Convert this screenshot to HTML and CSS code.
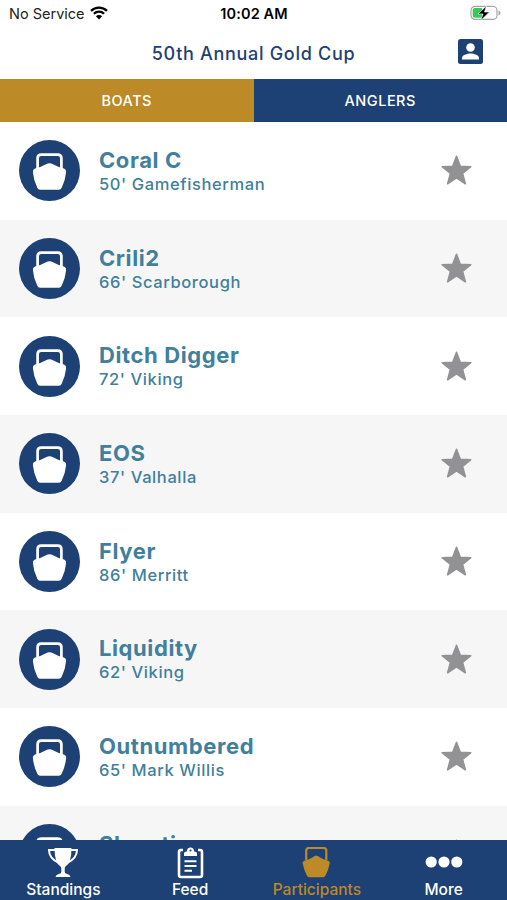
FILE: index.html
```html
<!DOCTYPE html>
<html lang="en">
<head>
  <meta charset="UTF-8">
  <meta name="viewport" content="width=device-width, initial-scale=1.0">
  <title>50th Annual Gold Cup</title>
  <link rel="stylesheet" href="styles.css">
</head>
<body>
  <svg class="defs" width="0" height="0">
    <symbol id="boat" viewBox="0 0 61 61">
      <path d="M18.600 29V18.300q0-3.700 3.700-3.700h16.400q3.700 0 3.700 3.700V29" fill="none" stroke="currentColor" stroke-width="2.700"/>
      <path d="M16 28.600Q22 27 27 24.200q3.500-1.800 7 0Q39 27 45 28.600q2.600 1.200 2.100 3.600-.7 7.800-4.400 15.600-.9 2-2.800 2H21.100q-1.900 0-2.800-2-3.700-7.800-4.400-15.600-.5-2.400 2.100-3.600z" fill="currentColor"/>
    </symbol>
    <symbol id="star" viewBox="0 0 32 32">
      <path d="M16 2.200l3.700 9.700 10.200.4-8 6.500 2.700 10.100-8.600-5.700-8.600 5.700 2.700-10.100-8-6.500 10.200-.4z" fill="#929294" stroke="#929294" stroke-width="1.500" stroke-linejoin="round"/>
    </symbol>
  </svg>

  <div class="status-bar">
    <div class="carrier">
      <span>No Service</span>
      <svg width="18" height="14" viewBox="0 0 18 14">
        <path d="M1 4.900a11.400 11.400 0 0 1 16 0M3.900 7.800a7.300 7.300 0 0 1 10.200 0" fill="none" stroke="#000" stroke-width="2.300"/>
        <path d="M5.900 10.200a4.400 4.400 0 0 1 6.200 0L9 13.400z"/>
      </svg>
    </div>
    <div class="clock">10:02 AM</div>
    <svg class="battery" width="31" height="16" viewBox="0 0 31 16">
      <rect x="1" y="1.400" width="26" height="13" rx="4" fill="#fff" stroke="#a5a5a5" stroke-width="1.200"/>
      <path d="M28.500 5.500q2 .8 2 2.500t-2 2.500z" fill="#a5a5a5"/>
      <path d="M5 3h7v9.800H5q-2.300 0-2.300-2.300V5.300Q2.700 3 5 3z" fill="#35cb5b"/>
      <path d="M16.300 1L8 9h5l-2.300 6.500L19.500 7h-5z" stroke="#fff" stroke-width=".6"/>
    </svg>
  </div>

  <header class="header">
    <h1>50th Annual Gold Cup</h1>
    <svg class="account" width="25" height="25" viewBox="0 0 25 25">
      <rect width="25" height="25" rx="2.500" fill="#1d4075"/>
      <circle cx="12.500" cy="8.500" r="4.300" fill="#fff"/>
      <path d="M4 20.500v-1.300c0-3 5-4.600 8.500-4.600s8.500 1.600 8.500 4.600v1.300z" fill="#fff"/>
    </svg>
  </header>

  <div class="tabs">
    <div class="tab active">BOATS</div>
    <div class="tab">ANGLERS</div>
  </div>

  <main class="list">
    <div class="row">
      <div class="avatar"><svg><use href="#boat"/></svg></div>
      <div class="info"><div class="name">Coral C</div><div class="model">50' Gamefisherman</div></div>
      <svg class="star"><use href="#star"/></svg>
    </div>
    <div class="row">
      <div class="avatar"><svg><use href="#boat"/></svg></div>
      <div class="info"><div class="name">Crili2</div><div class="model">66' Scarborough</div></div>
      <svg class="star"><use href="#star"/></svg>
    </div>
    <div class="row">
      <div class="avatar"><svg><use href="#boat"/></svg></div>
      <div class="info"><div class="name">Ditch Digger</div><div class="model">72' Viking</div></div>
      <svg class="star"><use href="#star"/></svg>
    </div>
    <div class="row">
      <div class="avatar"><svg><use href="#boat"/></svg></div>
      <div class="info"><div class="name">EOS</div><div class="model">37' Valhalla</div></div>
      <svg class="star"><use href="#star"/></svg>
    </div>
    <div class="row">
      <div class="avatar"><svg><use href="#boat"/></svg></div>
      <div class="info"><div class="name">Flyer</div><div class="model">86' Merritt</div></div>
      <svg class="star"><use href="#star"/></svg>
    </div>
    <div class="row">
      <div class="avatar"><svg><use href="#boat"/></svg></div>
      <div class="info"><div class="name">Liquidity</div><div class="model">62' Viking</div></div>
      <svg class="star"><use href="#star"/></svg>
    </div>
    <div class="row">
      <div class="avatar"><svg><use href="#boat"/></svg></div>
      <div class="info"><div class="name">Outnumbered</div><div class="model">65' Mark Willis</div></div>
      <svg class="star"><use href="#star"/></svg>
    </div>
    <div class="row">
      <div class="avatar"><svg><use href="#boat"/></svg></div>
      <div class="info"><div class="name">Showtime</div></div>
      <svg class="star"><use href="#star"/></svg>
    </div>
  </main>

  <nav class="tab-bar">
    <div class="item">
      <svg width="32" height="32" viewBox="0 0 32 32">
        <path d="M7.500 1h17q0 15-6 18.500-.8.600-.8 2V25q0 1.500 2.500 2 2.800.500 3.300 3h-15q.500-2.500 3.300-3 2.500-.500 2.500-2v-3.500q0-1.400-.8-2Q7.500 16 7.500 1z" fill="#fff"/>
        <path d="M8.500 3H2q0 8.500 10 13M23.500 3H30q0 8.500-10 13" fill="none" stroke="#fff" stroke-width="2"/>
      </svg>
      <span>Standings</span>
    </div>
    <div class="item">
      <svg width="32" height="32" viewBox="0 0 32 32">
        <path d="M9 3H7Q5 3 5 5v23q0 2 2 2h19q2 0 2-2V5q0-2-2-2h-2" fill="none" stroke="#fff" stroke-width="2.600"/>
        <path d="M10 9V6.500q0-1.800 2.800-2Q13.200.5 16.500.5t3.700 4q2.800.2 2.800 2V9z" fill="#fff"/>
        <circle cx="16.500" cy="3.500" r="1.100" fill="#1d4075"/>
        <path d="M10.500 14.300h12M10.500 19h12M10.500 23.700H18" stroke="#fff" stroke-width="2.100"/>
      </svg>
      <span>Feed</span>
    </div>
    <div class="item active">
      <svg width="32" height="32" viewBox="0 0 32 32">
        <path d="M5.200 13V3.800Q5.200 1 8 1h14.500q2.800 0 2.800 2.800V13" fill="none" stroke="#bc8a26" stroke-width="2.200"/>
        <path d="M15.200 8.500q1 0 4 1.900t7.200 3q2.800.9 2.300 3-1.200 6.300-4.200 12.200-.8 1.700-2.300 1.700h-14q-1.500 0-2.300-1.700-3-5.900-4.200-12.200-.5-2.100 2.300-3 4.200-1.100 7.200-3t4-1.900z" fill="#bc8a26"/>
      </svg>
      <span>Participants</span>
    </div>
    <div class="item">
      <svg width="38" height="32" viewBox="0 0 38 32">
        <g fill="#fff"><circle cx="6.200" cy="15" r="5.600"/><circle cx="19" cy="15" r="5.600"/><circle cx="31.800" cy="15" r="5.600"/></g>
      </svg>
      <span>More</span>
    </div>
  </nav>
</body>
</html>
```

FILE: styles.css
```css
* {
  box-sizing: border-box;
}
body {
  margin: 0;
  height: 900px;
  overflow: hidden;
  display: flex;
  flex-direction: column;
  background: #fff;
  font-family: Inter, sans-serif;
}
.defs {
  position: absolute;
}
.status-bar {
  height: 27px;
  flex: none;
  display: grid;
  grid-template-columns: 1fr auto 1fr;
  align-items: center;
  padding: 0 6px 0 9px;
  font-size: 14.5px;
  color: #222;
}
.carrier {
  display: flex;
  align-items: center;
  gap: 5px;
}
.carrier svg {
  margin-bottom: 2px;
}
.clock {
  color: #000;
  font-weight: 600;
  letter-spacing: 0.1px;
  margin-right: 2px;
}
.battery {
  justify-self: end;
  margin-bottom: 1px;
}
.header {
  height: 52px;
  flex: none;
  display: grid;
  grid-template-columns: 1fr auto 1fr;
  align-items: center;
  padding: 0 24px;
}
h1 {
  grid-column: 2;
  margin: 0;
  font-size: 18px;
  font-weight: 500;
  letter-spacing: 0.7px;
  color: #1d4075;
}
.account {
  justify-self: end;
  margin-bottom: 3px;
}
.tabs {
  height: 43px;
  flex: none;
  display: flex;
}
.tab {
  flex: 1;
  display: flex;
  align-items: center;
  justify-content: center;
  background: #1d4075;
  color: #fff;
  font-size: 14.5px;
  font-weight: 500;
  letter-spacing: 0.5px;
}
.tab.active {
  background: #bc8a26;
}
.list {
  flex: 1;
  min-height: 0;
  overflow: hidden;
}
.row {
  height: 97.7px;
  display: flex;
  align-items: center;
  padding: 0 34px 0 19px;
}
.row:nth-child(even) {
  background: #f6f6f6;
}
.avatar {
  width: 61px;
  height: 61px;
  border-radius: 50%;
  background: #1d4075;
  color: #fff;
}
.avatar svg {
  display: block;
  width: 61px;
  height: 61px;
}
.info {
  flex: 1;
  height: 46px;
  margin-left: 19px;
  color: #417f9c;
}
.name {
  font-size: 22px;
  line-height: 25px;
  font-weight: 700;
  letter-spacing: 0.6px;
}
.model {
  font-size: 16.5px;
  line-height: 23px;
  font-weight: 500;
  letter-spacing: 0.6px;
}
.star {
  width: 33px;
  height: 33px;
}
.tab-bar {
  height: 60px;
  flex: none;
  display: flex;
  background: #1d4075;
  color: #fff;
}
.item {
  flex: 1;
  display: flex;
  flex-direction: column;
  align-items: center;
  padding-top: 7px;
  font-size: 15.5px;
  font-weight: 500;
  line-height: 21px;
}
.item svg {
  flex: none;
}
.item.active {
  color: #bc8a26;
}
```
